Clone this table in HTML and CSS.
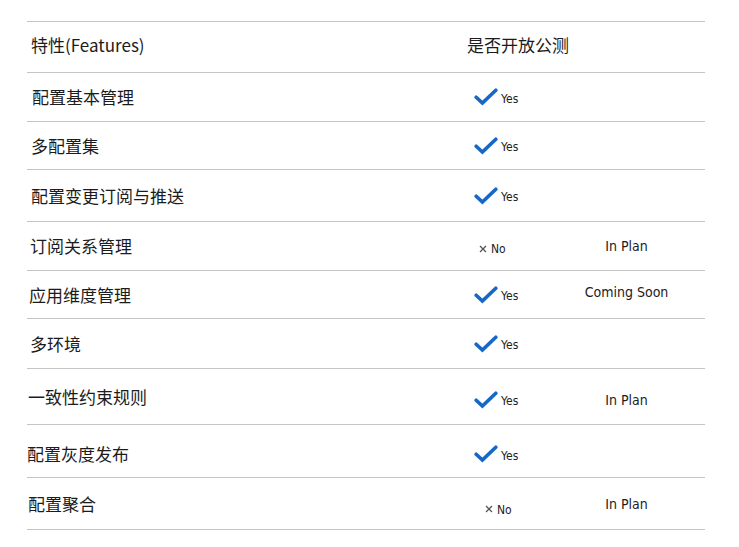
FILE: index.html
```html
<!DOCTYPE html>
<html lang="zh">
<head>
<meta charset="utf-8">
<title>Features</title>
<link rel="stylesheet" href="styles.css">
</head>
<body>
<div class="table">
  <div class="row head h51">
    <div class="feat p4">特性(Features)</div>
    <div class="open">是否开放公测</div>
    <div class="note"></div>
  </div>
  <div class="row h49">
    <div class="feat p5">配置基本管理</div>
    <div class="open"><span class="yes"><svg class="check" viewBox="0 0 24 18" width="24" height="18"><path d="M2.2 9.2 L8.4 15 L21.8 2.2"/></svg><span class="lbl">Yes</span></span></div>
    <div class="note"></div>
  </div>
  <div class="row h48">
    <div class="feat p4">多配置集</div>
    <div class="open"><span class="yes"><svg class="check" viewBox="0 0 24 18" width="24" height="18"><path d="M2.2 9.2 L8.4 15 L21.8 2.2"/></svg><span class="lbl">Yes</span></span></div>
    <div class="note"></div>
  </div>
  <div class="row h52">
    <div class="feat p4">配置变更订阅与推送</div>
    <div class="open"><span class="yes"><svg class="check" viewBox="0 0 24 18" width="24" height="18"><path d="M2.2 9.2 L8.4 15 L21.8 2.2"/></svg><span class="lbl">Yes</span></span></div>
    <div class="note"></div>
  </div>
  <div class="row h49">
    <div class="feat p3">订阅关系管理</div>
    <div class="open"><span class="no n1"><svg class="x" viewBox="0 0 8 8" width="8" height="8"><path d="M1 1 L7 7 M7 1 L1 7"/></svg><span class="lbl">No</span></span></div>
    <div class="note">In Plan</div>
  </div>
  <div class="row h48">
    <div class="feat p2">应用维度管理</div>
    <div class="open"><span class="yes"><svg class="check" viewBox="0 0 24 18" width="24" height="18"><path d="M2.2 9.2 L8.4 15 L21.8 2.2"/></svg><span class="lbl">Yes</span></span></div>
    <div class="note up">Coming Soon</div>
  </div>
  <div class="row h50">
    <div class="feat p3">多环境</div>
    <div class="open"><span class="yes"><svg class="check" viewBox="0 0 24 18" width="24" height="18"><path d="M2.2 9.2 L8.4 15 L21.8 2.2"/></svg><span class="lbl">Yes</span></span></div>
    <div class="note"></div>
  </div>
  <div class="row h56">
    <div class="feat p1">一致性约束规则</div>
    <div class="open down"><span class="yes"><svg class="check" viewBox="0 0 24 18" width="24" height="18"><path d="M2.2 9.2 L8.4 15 L21.8 2.2"/></svg><span class="lbl">Yes</span></span></div>
    <div class="note down">In Plan</div>
  </div>
  <div class="row h53">
    <div class="feat p0 down">配置灰度发布</div>
    <div class="open down"><span class="yes"><svg class="check" viewBox="0 0 24 18" width="24" height="18"><path d="M2.2 9.2 L8.4 15 L21.8 2.2"/></svg><span class="lbl">Yes</span></span></div>
    <div class="note"></div>
  </div>
  <div class="row h52">
    <div class="feat p1">配置聚合</div>
    <div class="open down"><span class="no n2"><svg class="x" viewBox="0 0 8 8" width="8" height="8"><path d="M1 1 L7 7 M7 1 L1 7"/></svg><span class="lbl">No</span></span></div>
    <div class="note">In Plan</div>
  </div>
</div>
</body>
</html>
```

FILE: styles.css
```css
html, body {
  margin: 0;
  padding: 0;
  background: #ffffff;
}

body {
  padding: 21px 0 0 27px;
  font-family: "Noto Sans CJK SC", "Noto Sans", sans-serif;
  color: #1c1c1c;
}

.table {
  width: 678px;
  border-top: 1px solid #c4c4c4;
}

.row {
  display: grid;
  grid-template-columns: 436px 85px 157px;
  align-items: center;
  border-bottom: 1px solid #c4c4c4;
  box-sizing: border-box;
}

.h48 { height: 48px; }
.h49 { height: 49px; }
.h50 { height: 50px; }
.h51 { height: 51px; }
.h52 { height: 52px; }
.h53 { height: 53px; }
.h56 { height: 56px; }

.feat {
  font-size: 17px;
  line-height: 24px;
  white-space: nowrap;
}

.head .feat,
.head .open {
  position: relative;
  top: -2px;
}

.p0 { padding-left: 0; }
.p1 { padding-left: 1px; }
.p2 { padding-left: 2px; }
.p3 { padding-left: 3px; }
.p4 { padding-left: 4px; }
.p5 { padding-left: 5px; }

.open {
  font-size: 17px;
  line-height: 24px;
  padding-left: 4px;
  white-space: nowrap;
}

.yes {
  display: flex;
  align-items: center;
  padding-left: 7px;
}

.check {
  display: block;
  fill: none;
  stroke: #1767c6;
  stroke-width: 3.6;
  stroke-linecap: round;
  stroke-linejoin: miter;
}

.lbl {
  font-family: "DejaVu Sans Condensed", "DejaVu Sans", sans-serif;
  font-stretch: condensed;
  font-size: 12px;
  line-height: 14px;
  color: #222;
  margin-top: 3px;
}

.yes .lbl {
  margin-left: 3px;
}

.no {
  display: flex;
  align-items: center;
  margin-top: 4px;
}

.n1 { padding-left: 12px; }
.n2 { padding-left: 18px; }

.x {
  display: block;
  fill: none;
  stroke: #555;
  stroke-width: 1.3;
  margin-right: 4px;
  margin-top: 1px;
}

.no .lbl {
  margin-top: 2px;
}

.note {
  font-family: "DejaVu Sans Condensed", "DejaVu Sans", sans-serif;
  font-stretch: condensed;
  font-size: 14px;
  line-height: 18px;
  text-align: center;
  color: #1c1c1c;
}

.up {
  position: relative;
  top: -3px;
}

.down {
  position: relative;
  top: 3px;
}
```
